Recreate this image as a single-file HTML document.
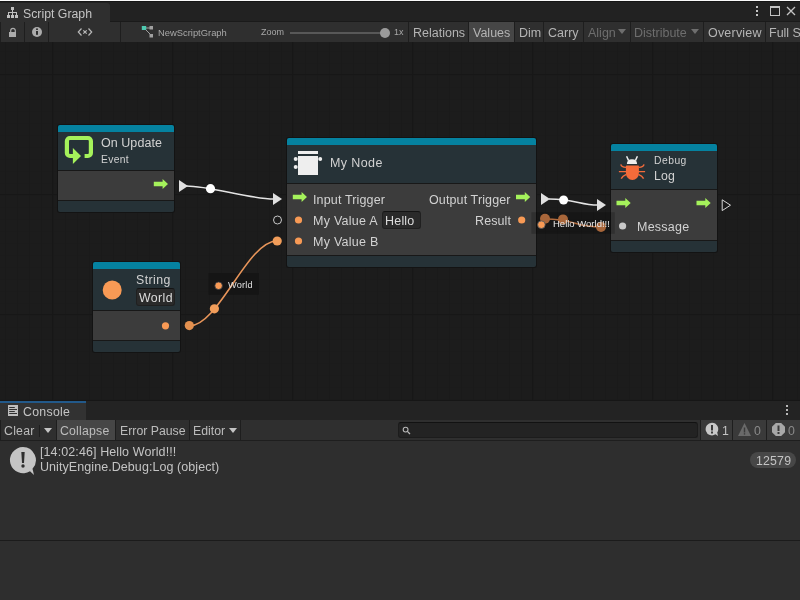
<!DOCTYPE html>
<html><head><meta charset="utf-8">
<style>
*{margin:0;padding:0;box-sizing:border-box}
html,body{width:800px;height:600px;overflow:hidden;background:#1d1d1d;font-family:"Liberation Sans",sans-serif}
.a{position:absolute}
.t{position:absolute;white-space:pre;line-height:1;will-change:transform}
#top0{left:0;top:0;width:800px;height:1px;background:#fafafa}
#top1{left:0;top:1px;width:800px;height:1px;background:#161616}
#tabbar{left:0;top:2px;width:800px;height:19px;background:#222}
#tabline{left:0;top:21px;width:800px;height:1px;background:#1a1a1a}
#tab{left:0;top:3px;width:110px;height:19px;background:#2f2f2f;border-top-right-radius:3px}
#toolbar{left:0;top:22px;width:800px;height:20px;background:#2f2f2f}
.sep{position:absolute;top:22px;width:1px;height:20px;background:#1e1e1e}
#graph{left:0;top:42px;width:800px;height:358px;background-color:#1c1c1c;
background-image:
linear-gradient(90deg, #171717 1px, transparent 1px),
linear-gradient(180deg, #171717 1px, transparent 1px),
linear-gradient(90deg, #1a1a1a 1px, transparent 1px),
linear-gradient(180deg, #1b1b1b 1px, transparent 1px);
background-size:120px 120px,120px 120px,12px 12px,12px 12px;
background-position:52px 0,0 32px,5px 0,0 9px}
.node{position:absolute;border-radius:2px;overflow:hidden;background:#181818;box-shadow:0 0 0 1px #131313}
.teal{position:absolute;left:0;top:0;right:0;background:#0582a0}
.hdr{position:absolute;left:0;right:0;background:#263237}
.body{position:absolute;left:0;right:0;background:#3c3c3c}
.ftr{position:absolute;left:0;right:0;background:#263237}
.ntxt{color:#d2d2d2}
</style></head><body>
<div class="a" id="top0"></div>
<div class="a" id="top1"></div>
<div class="a" id="tabbar"></div>
<div class="a" id="tabline"></div>
<div class="a" id="tab"></div>
<!-- hierarchy icon -->
<svg class="a" style="left:0;top:0" width="24" height="22" viewBox="0 0 24 22"><g fill="#c0c0c0"><rect x="11" y="7" width="3" height="3"/><rect x="12" y="10" width="1" height="2"/><rect x="8" y="12" width="9" height="1"/><rect x="8" y="12" width="1" height="3"/><rect x="12" y="12" width="1" height="3"/><rect x="16" y="12" width="1" height="3"/><rect x="7" y="15" width="3" height="3"/><rect x="11" y="15" width="3" height="3"/><rect x="15" y="15" width="3" height="3"/></g></svg>
<div class="t" style="left:23px;top:8px;font-size:12.3px;color:#c4c4c4">Script Graph</div>
<!-- window controls -->
<div class="a" style="left:756px;top:6px;width:2px;height:2px;background:#c4c4c4"></div>
<div class="a" style="left:756px;top:10px;width:2px;height:2px;background:#c4c4c4"></div>
<div class="a" style="left:756px;top:14px;width:2px;height:2px;background:#c4c4c4"></div>
<div class="a" style="left:770px;top:6px;width:10px;height:10px;border:1px solid #c4c4c4;border-top-width:2px"></div>
<svg class="a" style="left:786px;top:6px" width="10" height="10" viewBox="0 0 10 10"><path d="M1 1L9 9M9 1L1 9" stroke="#c4c4c4" stroke-width="1.3"/></svg>

<div class="a" id="toolbar"></div>
<div class="sep" style="left:0"></div>
<div class="sep" style="left:24px"></div>
<div class="sep" style="left:48px"></div>
<div class="sep" style="left:120px"></div>
<div class="sep" style="left:408px"></div>
<div class="a" style="left:469px;top:22px;width:45px;height:20px;background:#464646"></div>
<div class="sep" style="left:468px"></div>
<div class="sep" style="left:514px"></div>
<div class="sep" style="left:543px"></div>
<div class="sep" style="left:583px"></div>
<div class="sep" style="left:630px"></div>
<div class="sep" style="left:703px"></div>
<div class="sep" style="left:765px"></div>
<!-- lock -->
<svg class="a" style="left:0;top:22px" width="48" height="20" viewBox="0 22 48 20"><path d="M10.7 32.2V30.6a2.3 2.3 0 0 1 4.6 0V32.2" fill="none" stroke="#acacac" stroke-width="1.2"/><rect x="9" y="32" width="7" height="5" fill="#acacac"/>
<circle cx="37" cy="32" r="5" fill="#acacac"/><rect x="36" y="28.5" width="2" height="1.4" fill="#2f2f2f"/><rect x="36" y="31" width="2" height="3.8" fill="#2f2f2f"/></svg>
<svg class="a" style="left:70px;top:24px" width="30" height="16" viewBox="70 24 30 16"><path d="M81.5 28.5L78.3 32L81.5 35.5M88.5 28.5L91.7 32L88.5 35.5M83.3 30.3L86.7 33.7M86.7 30.3L83.3 33.7" fill="none" stroke="#b8b8b8" stroke-width="1.2"/></svg>
<!-- graph icon -->
<svg class="a" style="left:141px;top:25px" width="14" height="14" viewBox="0 0 14 14"><path d="M3 3H10M3 3L10 10" stroke="#a0a0a0" stroke-width="1"/><rect x="0.8" y="1" width="4.4" height="4" fill="#4ec9b0"/><rect x="8.5" y="1" width="3.5" height="3.5" fill="#a0a0a0"/><rect x="8.5" y="9" width="3.5" height="3.5" fill="#a0a0a0"/></svg>
<div class="t" style="left:158px;top:28px;font-size:9.4px;color:#a8a8a8">NewScriptGraph</div>
<div class="t" style="left:261px;top:28px;font-size:9px;color:#a8a8a8">Zoom</div>
<div class="a" style="left:290px;top:32px;width:94px;height:2px;background:#585858"></div>
<div class="a" style="left:380px;top:28px;width:10px;height:10px;border-radius:50%;background:#9a9a9a"></div>
<div class="t" style="left:394px;top:28px;font-size:9px;color:#a8a8a8">1x</div>
<div class="t" style="left:413px;top:27px;font-size:12.5px;color:#b4b4b4">Relations</div>
<div class="t" style="left:473px;top:27px;font-size:12.5px;color:#b4b4b4">Values</div>
<div class="t" style="left:518.5px;top:27px;font-size:12.5px;color:#b4b4b4">Dim</div>
<div class="t" style="left:548px;top:27px;font-size:12.5px;color:#b4b4b4">Carry</div>
<div class="t" style="left:587.5px;top:27px;font-size:12.5px;color:#6e6e6e">Align</div>
<svg class="a" style="left:618px;top:29px" width="8" height="5"><path d="M0 0H8L4 5Z" fill="#6e6e6e"/></svg>
<div class="t" style="left:633.5px;top:27px;font-size:12.5px;color:#6e6e6e">Distribute</div>
<svg class="a" style="left:691px;top:29px" width="8" height="5"><path d="M0 0H8L4 5Z" fill="#6e6e6e"/></svg>
<div class="t" style="left:708px;top:27px;font-size:12.5px;color:#b4b4b4;letter-spacing:0.2px">Overview</div>
<div class="t" style="left:769px;top:27px;font-size:12.5px;color:#b4b4b4">Full Screen</div>


<div class="a" id="graph"></div>

<!-- ============ NODES ============ -->
<!-- On Update -->
<div class="node" style="left:58px;top:125px;width:116px;height:87px">
 <div class="teal" style="height:7px"></div>
 <div class="hdr" style="top:7px;height:38px"></div>
 <div class="body" style="top:46px;height:29px"></div>
 <div class="ftr" style="top:76px;height:11px"></div>
</div>
<!-- My Node -->
<div class="node" style="left:287px;top:138px;width:249px;height:129px">
 <div class="teal" style="height:7px"></div>
 <div class="hdr" style="top:7px;height:38px"></div>
 <div class="body" style="top:46px;height:71px"></div>
 <div class="ftr" style="top:118px;height:11px"></div>
</div>
<!-- Debug Log -->
<div class="node" style="left:611px;top:144px;width:106px;height:108px">
 <div class="teal" style="height:7px"></div>
 <div class="hdr" style="top:7px;height:38px"></div>
 <div class="body" style="top:46px;height:50px"></div>
 <div class="ftr" style="top:97px;height:11px"></div>
</div>
<!-- String -->
<div class="node" style="left:93px;top:262px;width:87px;height:90px">
 <div class="teal" style="height:7px"></div>
 <div class="hdr" style="top:7px;height:41px"></div>
 <div class="body" style="top:49px;height:29px"></div>
 <div class="ftr" style="top:79px;height:11px"></div>
</div>
<div class="a" style="left:382px;top:211px;width:39px;height:18px;border-radius:3px;background:#2a2a2a;border:1px solid #202020;border-top-color:#141414"></div>
<div class="a" style="left:136px;top:288px;width:39px;height:18px;border-radius:3px;background:#2a2a2a;border:1px solid #202020;border-top-color:#141414"></div>

<svg class="a" style="left:0;top:0" width="800" height="400" viewBox="0 0 800 400">
 <defs>
  <path id="arr" d="M0 2.8H8.8V0L14.2 5L8.8 10V7.2H0Z"/>
 </defs>
 <!-- On Update icon -->
 <path d="M84.6 156H87.9A3 3 0 0 0 90.9 153V141A3 3 0 0 0 87.9 138H69.9A3 3 0 0 0 66.9 141V153A3 3 0 0 0 69.9 156H73.5" fill="none" stroke="#a5f25b" stroke-width="4.2"/>
 <path d="M72.9 147.9L81 156L72.9 163.9Z" fill="#a5f25b"/>
 <!-- My Node icon -->
 <g fill="#eeeeee"><rect x="298" y="151" width="20" height="3"/><rect x="298" y="156" width="20" height="19"/><circle cx="295.7" cy="158.9" r="2"/><circle cx="295.7" cy="167" r="2"/><circle cx="320.2" cy="158.9" r="2"/></g>
 <!-- Bug icon -->
 <path d="M626.6 156.3L628.6 160.6M637.4 156.3L635.4 160.6" stroke="#eeeeee" stroke-width="1.5" fill="none"/>
 <path d="M626.9 163.9Q626.9 159.2 632 159.2Q637.1 159.2 637.1 163.9Z" fill="#eeeeee"/>
 <path d="M626.6 165.6H638.3Q638.9 165.6 638.9 166.4V173A6.5 7 0 0 1 625.9 173V166.4Q625.9 165.6 626.6 165.6Z" fill="#f46b3a"/>
 <path d="M618.9 171.6H645.1M626 167.4Q621.3 167.2 620.8 164.4M638.8 167.4Q643.5 167.2 644 164.4M626.3 174.4Q622.5 176 621.2 178.6M638.5 174.4Q642.3 176 643.6 178.6" fill="none" stroke="#f46b3a" stroke-width="1.4"/>
 <!-- String icon -->
 <circle cx="112.2" cy="290" r="9.5" fill="#f89a55"/>
 <!-- green arrows -->
 <g fill="#a5f25b">
  <use href="#arr" x="153.8" y="179"/>
  <use href="#arr" x="292.8" y="192"/>
  <use href="#arr" x="516" y="192"/>
  <use href="#arr" x="616.5" y="198"/>
  <use href="#arr" x="696.5" y="198"/>
 </g>
 <!-- value ports -->
 <g fill="#f89a55">
  <circle cx="298.5" cy="220" r="3.6"/>
  <circle cx="298.5" cy="241" r="3.6"/>
  <circle cx="521.7" cy="220" r="3.6"/>
  <circle cx="165.5" cy="325.8" r="3.6"/>
 </g>
 <circle cx="622.6" cy="226" r="3.6" fill="#c8c8c8"/>
 <path d="M722.2 199.8L730.5 205.2L722.2 210.6Z" fill="none" stroke="#d8d8d8" stroke-width="1"/>

 <!-- flow edge 1 -->
 <path d="M186 186C211 186 249 199 274 199" fill="none" stroke="#e4e4e4" stroke-width="1.6"/>
 <path d="M179 180L188 186L179 192Z" fill="#e0e0e0"/>
 <path d="M273 193L282 199L273 205Z" fill="#e0e0e0"/>
 <circle cx="210.5" cy="188.7" r="4.6" fill="#fff"/>
 <circle cx="277.5" cy="220" r="4" fill="none" stroke="#c8c8c8" stroke-width="1"/>
 <!-- flow edge 2 -->
 <path d="M549 199C575 199 580 205 598 205" fill="none" stroke="#e4e4e4" stroke-width="1.6"/>
 <path d="M541 193L550 199L541 205Z" fill="#e0e0e0"/>
 <path d="M597 199L606 205L597 211Z" fill="#e0e0e0"/>
 <circle cx="563.6" cy="200" r="4.5" fill="#fff"/>
 <!-- World label box -->
 <rect x="208.5" y="273" width="50.3" height="21.7" fill="#151515"/>
 <!-- value edge String -> My Value B -->
 <path d="M189 326C219 326 247 241 277 241" fill="none" stroke="#e8955a" stroke-width="1.6"/>
 <circle cx="189.3" cy="325.6" r="4.6" fill="#e3904f"/>
 <circle cx="214.4" cy="308.8" r="4.6" fill="#f19d5a"/>
 <circle cx="277.2" cy="241" r="4.6" fill="#f19d5a"/>
 <circle cx="218.6" cy="285.75" r="3.8" fill="#f89a55" stroke="#2b3540" stroke-width="0.8"/>
 <!-- Hello World label -->
 <rect x="531.4" y="212.2" width="83.4" height="21.6" fill="#000" fill-opacity="0.2"/>
 <path d="M545 219C575 219 575 227 601 227" fill="none" stroke="#b06a3c" stroke-width="1.5"/>
 <circle cx="545" cy="218.7" r="5" fill="#a8663a"/>
 <circle cx="563" cy="219.4" r="5" fill="#a8663a"/>
 <circle cx="601" cy="226.9" r="5" fill="#a8663a"/>
 <circle cx="541.4" cy="224.7" r="3.8" fill="#f89a55" stroke="#4a5560" stroke-width="0.8"/>
</svg>
<div class="t ntxt" style="left:101px;top:137px;font-size:12.5px;letter-spacing:0.05px">On Update</div>
<div class="t ntxt" style="left:101px;top:155px;font-size:10.3px;letter-spacing:0.35px">Event</div>
<div class="t ntxt" style="left:330px;top:157px;font-size:12.5px;letter-spacing:0.4px">My Node</div>
<div class="t ntxt" style="left:313px;top:194px;font-size:12.5px;letter-spacing:0.15px">Input Trigger</div>
<div class="t ntxt" style="left:429px;top:194px;font-size:12.5px;letter-spacing:0.12px">Output Trigger</div>
<div class="t ntxt" style="left:313px;top:215px;font-size:12.5px;letter-spacing:0.25px">My Value A</div>
<div class="t ntxt" style="left:385px;top:215px;font-size:12.5px;letter-spacing:0.2px;color:#dcdcdc">Hello</div>
<div class="t ntxt" style="left:475px;top:215px;font-size:12.5px;letter-spacing:0.1px">Result</div>
<div class="t ntxt" style="left:313px;top:236px;font-size:12.5px;letter-spacing:0.25px">My Value B</div>
<div class="t ntxt" style="left:654px;top:156px;font-size:10.3px;letter-spacing:0.5px">Debug</div>
<div class="t ntxt" style="left:654px;top:170px;font-size:12.3px;letter-spacing:0.2px">Log</div>
<div class="t ntxt" style="left:636.5px;top:221px;font-size:12.5px;letter-spacing:0.25px">Message</div>
<div class="t ntxt" style="left:136px;top:274px;font-size:12.3px;letter-spacing:0.45px">String</div>
<div class="t ntxt" style="left:139px;top:292px;font-size:12.3px;letter-spacing:0.4px;color:#dcdcdc">World</div>
<div class="t" style="left:228px;top:281px;font-size:9.2px;letter-spacing:0.2px;color:#e0e0e0">World</div>
<div class="t" style="left:552.5px;top:219px;font-size:9.5px;color:#e8e8e8">Hello World!!!</div>

<!-- ============ CONSOLE ============ -->
<div class="a" style="left:0;top:400px;width:800px;height:1px;background:#161616"></div>
<div class="a" style="left:0;top:401px;width:800px;height:19px;background:#232323"></div>
<div class="a" style="left:0;top:401px;width:86px;height:19px;background:#323232"></div>
<div class="a" style="left:0;top:401px;width:86px;height:2px;background:#22598a"></div>
<svg class="a" style="left:0;top:400px" width="24" height="20" viewBox="0 400 24 20"><rect x="8" y="405" width="10" height="11" fill="#bdbdbd"/><g fill="#303030"><rect x="9.2" y="407" width="5.6" height="1"/><rect x="9.2" y="409" width="7.8" height="1"/><rect x="9.2" y="411" width="5.6" height="1"/><rect x="9.2" y="413" width="7.8" height="1"/></g></svg>
<div class="t" style="left:22.5px;top:406px;font-size:12.3px;letter-spacing:0.3px;color:#c4c4c4">Console</div>
<div class="a" style="left:786px;top:405px;width:2px;height:2px;background:#b8b8b8"></div>
<div class="a" style="left:786px;top:409px;width:2px;height:2px;background:#b8b8b8"></div>
<div class="a" style="left:786px;top:413px;width:2px;height:2px;background:#b8b8b8"></div>

<div class="a" style="left:0;top:420px;width:800px;height:20px;background:#2f2f2f"></div>
<div class="a" style="left:57px;top:420px;width:58px;height:20px;background:#464646"></div>
<div class="sep" style="top:420px;left:0"></div>
<div class="a" style="left:39px;top:425px;width:1px;height:12px;background:#1e1e1e"></div>
<div class="sep" style="top:420px;left:56px"></div>
<div class="sep" style="top:420px;left:115px"></div>
<div class="sep" style="top:420px;left:189px"></div>
<div class="sep" style="top:420px;left:240px"></div>
<div class="t" style="left:4px;top:425px;font-size:12.3px;letter-spacing:0.25px;color:#bcbcbc">Clear</div>
<svg class="a" style="left:44px;top:428px" width="8" height="5"><path d="M0 0H8L4 5Z" fill="#c4c4c4"/></svg>
<div class="t" style="left:59.5px;top:425px;font-size:12.3px;letter-spacing:0.2px;color:#bcbcbc">Collapse</div>
<div class="t" style="left:119.5px;top:425px;font-size:12.3px;color:#bcbcbc">Error Pause</div>
<div class="t" style="left:193px;top:425px;font-size:12.3px;color:#bcbcbc">Editor</div>
<svg class="a" style="left:229px;top:428px" width="8" height="5"><path d="M0 0H8L4 5Z" fill="#c4c4c4"/></svg>
<div class="a" style="left:398px;top:422px;width:300px;height:16px;border-radius:3px;background:#232323;border:1px solid #1c1c1c;border-top-color:#121212"></div>
<svg class="a" style="left:402px;top:426px" width="10" height="10" viewBox="0 0 10 10"><circle cx="3.6" cy="3.6" r="2.4" fill="none" stroke="#b8b8b8" stroke-width="1.1"/><path d="M5.4 5.4L8 8" stroke="#b8b8b8" stroke-width="1.3"/></svg>
<div class="a" style="left:701px;top:420px;width:99px;height:20px;background:#3a3a3a"></div>
<div class="sep" style="top:420px;left:700px"></div>
<div class="sep" style="top:420px;left:732px"></div>
<div class="sep" style="top:420px;left:766px"></div>
<svg class="a" style="left:705px;top:422px" width="15" height="15" viewBox="0 0 15 15"><path d="M7 0.8a6.3 6.3 0 1 0 3.5 11.5L13 14L12.2 10.5A6.3 6.3 0 0 0 7 0.8Z" fill="#c8c8c8"/><rect x="6" y="3" width="2" height="5.5" fill="#3a3a3a"/><rect x="6" y="9.5" width="2" height="2" fill="#3a3a3a"/></svg>
<div class="t" style="left:721.5px;top:425px;font-size:12.3px;color:#c4c4c4">1</div>
<svg class="a" style="left:737px;top:422px" width="15" height="15" viewBox="0 0 15 15"><path d="M7.5 1L14 14H1Z" fill="#6a6a6a"/><rect x="6.8" y="5.5" width="1.4" height="5" fill="#3a3a3a"/><rect x="6.8" y="11.2" width="1.4" height="1.4" fill="#3a3a3a"/></svg>
<div class="t" style="left:754px;top:425px;font-size:12.3px;color:#8a8a8a">0</div>
<svg class="a" style="left:771px;top:422px" width="15" height="15" viewBox="0 0 15 15"><path d="M4.8 1H10.2L14 4.8V10.2L10.2 14H4.8L1 10.2V4.8Z" fill="#a8a8a8"/><rect x="6.5" y="3.5" width="2" height="5.5" fill="#3a3a3a"/><rect x="6.5" y="10" width="2" height="2" fill="#3a3a3a"/></svg>
<div class="t" style="left:788px;top:425px;font-size:12.3px;color:#8a8a8a">0</div>
<div class="a" style="left:0;top:440px;width:800px;height:1px;background:#1e1e1e"></div>

<div class="a" style="left:0;top:441px;width:800px;height:159px;background:#2e2e2e"></div>
<svg class="a" style="left:9px;top:446px" width="28" height="30" viewBox="0 0 28 30"><path d="M14 1a13.1 13.1 0 1 0 7 24.2L25 29L23.5 22.8A13.1 13.1 0 0 0 14 1Z" fill="#c4c4c4"/><path d="M12.3 6H15.7L15 17H13Z" fill="#2e2e2e"/><circle cx="14" cy="20" r="1.7" fill="#2e2e2e"/></svg>
<div class="t" style="left:39.5px;top:446px;font-size:12.5px;letter-spacing:0.1px;color:#c4c4c4">[14:02:46] Hello World!!!</div>
<div class="t" style="left:39.5px;top:461px;font-size:12.5px;letter-spacing:0.07px;color:#c4c4c4">UnityEngine.Debug:Log (object)</div>
<div class="a" style="left:750px;top:452px;width:46px;height:16px;border-radius:8px;background:#474747"></div>
<div class="t" style="left:756px;top:455px;font-size:12.3px;letter-spacing:0.2px;color:#c4c4c4">12579</div>
<div class="a" style="left:0;top:540px;width:800px;height:1px;background:#1b1b1b"></div>
</body></html>
